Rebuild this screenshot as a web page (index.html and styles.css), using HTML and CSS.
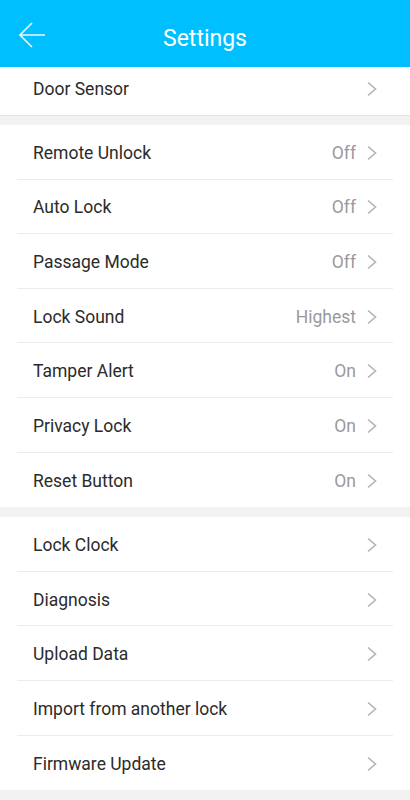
FILE: index.html
```html
<!DOCTYPE html>
<html>
<head>
    <title>Settings</title>
    <link rel="stylesheet" href="styles.css">
</head>
<body>
    <div class="header">
        <span class="back">
            <svg width="26" height="26" viewBox="0 0 26 26">
                <path d="M13 1 L1 13 L13 25 M1 13 H26" fill="none" stroke="#e6f8ff" stroke-width="1.6"/>
            </svg>
        </span>
        <h1>Settings</h1>
    </div>

    <div class="group first">
        <div class="row"><span class="label">Door Sensor</span><svg class="chev" viewBox="0 0 12 16"><path d="M2 1.5 L9.5 8 L2 14.5"/></svg></div>
    </div>

    <div class="group">
        <div class="row"><span class="label">Remote Unlock</span><span class="value">Off</span><svg class="chev" viewBox="0 0 12 16"><path d="M2 1.5 L9.5 8 L2 14.5"/></svg></div>
        <div class="row"><span class="label">Auto Lock</span><span class="value">Off</span><svg class="chev" viewBox="0 0 12 16"><path d="M2 1.5 L9.5 8 L2 14.5"/></svg></div>
        <div class="row"><span class="label">Passage Mode</span><span class="value">Off</span><svg class="chev" viewBox="0 0 12 16"><path d="M2 1.5 L9.5 8 L2 14.5"/></svg></div>
        <div class="row"><span class="label">Lock Sound</span><span class="value">Highest</span><svg class="chev" viewBox="0 0 12 16"><path d="M2 1.5 L9.5 8 L2 14.5"/></svg></div>
        <div class="row"><span class="label">Tamper Alert</span><span class="value">On</span><svg class="chev" viewBox="0 0 12 16"><path d="M2 1.5 L9.5 8 L2 14.5"/></svg></div>
        <div class="row"><span class="label">Privacy Lock</span><span class="value">On</span><svg class="chev" viewBox="0 0 12 16"><path d="M2 1.5 L9.5 8 L2 14.5"/></svg></div>
        <div class="row"><span class="label">Reset Button</span><span class="value">On</span><svg class="chev" viewBox="0 0 12 16"><path d="M2 1.5 L9.5 8 L2 14.5"/></svg></div>
    </div>

    <div class="group">
        <div class="row"><span class="label">Lock Clock</span><svg class="chev" viewBox="0 0 12 16"><path d="M2 1.5 L9.5 8 L2 14.5"/></svg></div>
        <div class="row"><span class="label">Diagnosis</span><svg class="chev" viewBox="0 0 12 16"><path d="M2 1.5 L9.5 8 L2 14.5"/></svg></div>
        <div class="row"><span class="label">Upload Data</span><svg class="chev" viewBox="0 0 12 16"><path d="M2 1.5 L9.5 8 L2 14.5"/></svg></div>
        <div class="row"><span class="label">Import from another lock</span><svg class="chev" viewBox="0 0 12 16"><path d="M2 1.5 L9.5 8 L2 14.5"/></svg></div>
        <div class="row"><span class="label">Firmware Update</span><svg class="chev" viewBox="0 0 12 16"><path d="M2 1.5 L9.5 8 L2 14.5"/></svg></div>
    </div>
</body>
</html>
```

FILE: styles.css
```css
body {
    font-family: Roboto, "Noto Sans", sans-serif;
    background-color: #f2f2f2;
    margin: 0;
    color: #2b2b2b;
}

.header {
    height: 67px;
    background-color: #00bfff;
    display: flex;
    align-items: center;
    justify-content: center;
    position: relative;
}

.header h1 {
    margin: 0;
    font-size: 23px;
    font-weight: normal;
    color: #fff;
    padding-top: 9px;
}

.back {
    position: absolute;
    left: 19px;
    top: 22px;
    display: flex;
}

.group {
    background-color: #fff;
    margin-bottom: 10px;
}

.group.first {
    box-shadow: 0 1px 0 #e4e4e4;
}

.group.first .row {
    height: 48px;
    padding-top: 0;
    padding-bottom: 4px;
}

.row {
    height: 54.6px;
    box-sizing: border-box;
    margin: 0 17px;
    padding: 2px 16px 0;
    display: flex;
    align-items: center;
    border-bottom: 1px solid #ececec;
}

.row:last-child {
    border-bottom: none;
}

.label {
    flex: 1;
    font-size: 17.5px;
}

.value {
    font-size: 17.5px;
    color: #9a9a9a;
    margin-right: 10px;
}

.chev {
    width: 12px;
    height: 16px;
    margin-right: -1px;
    fill: none;
    stroke: #b3b3b3;
    stroke-width: 1.6;
}
```
